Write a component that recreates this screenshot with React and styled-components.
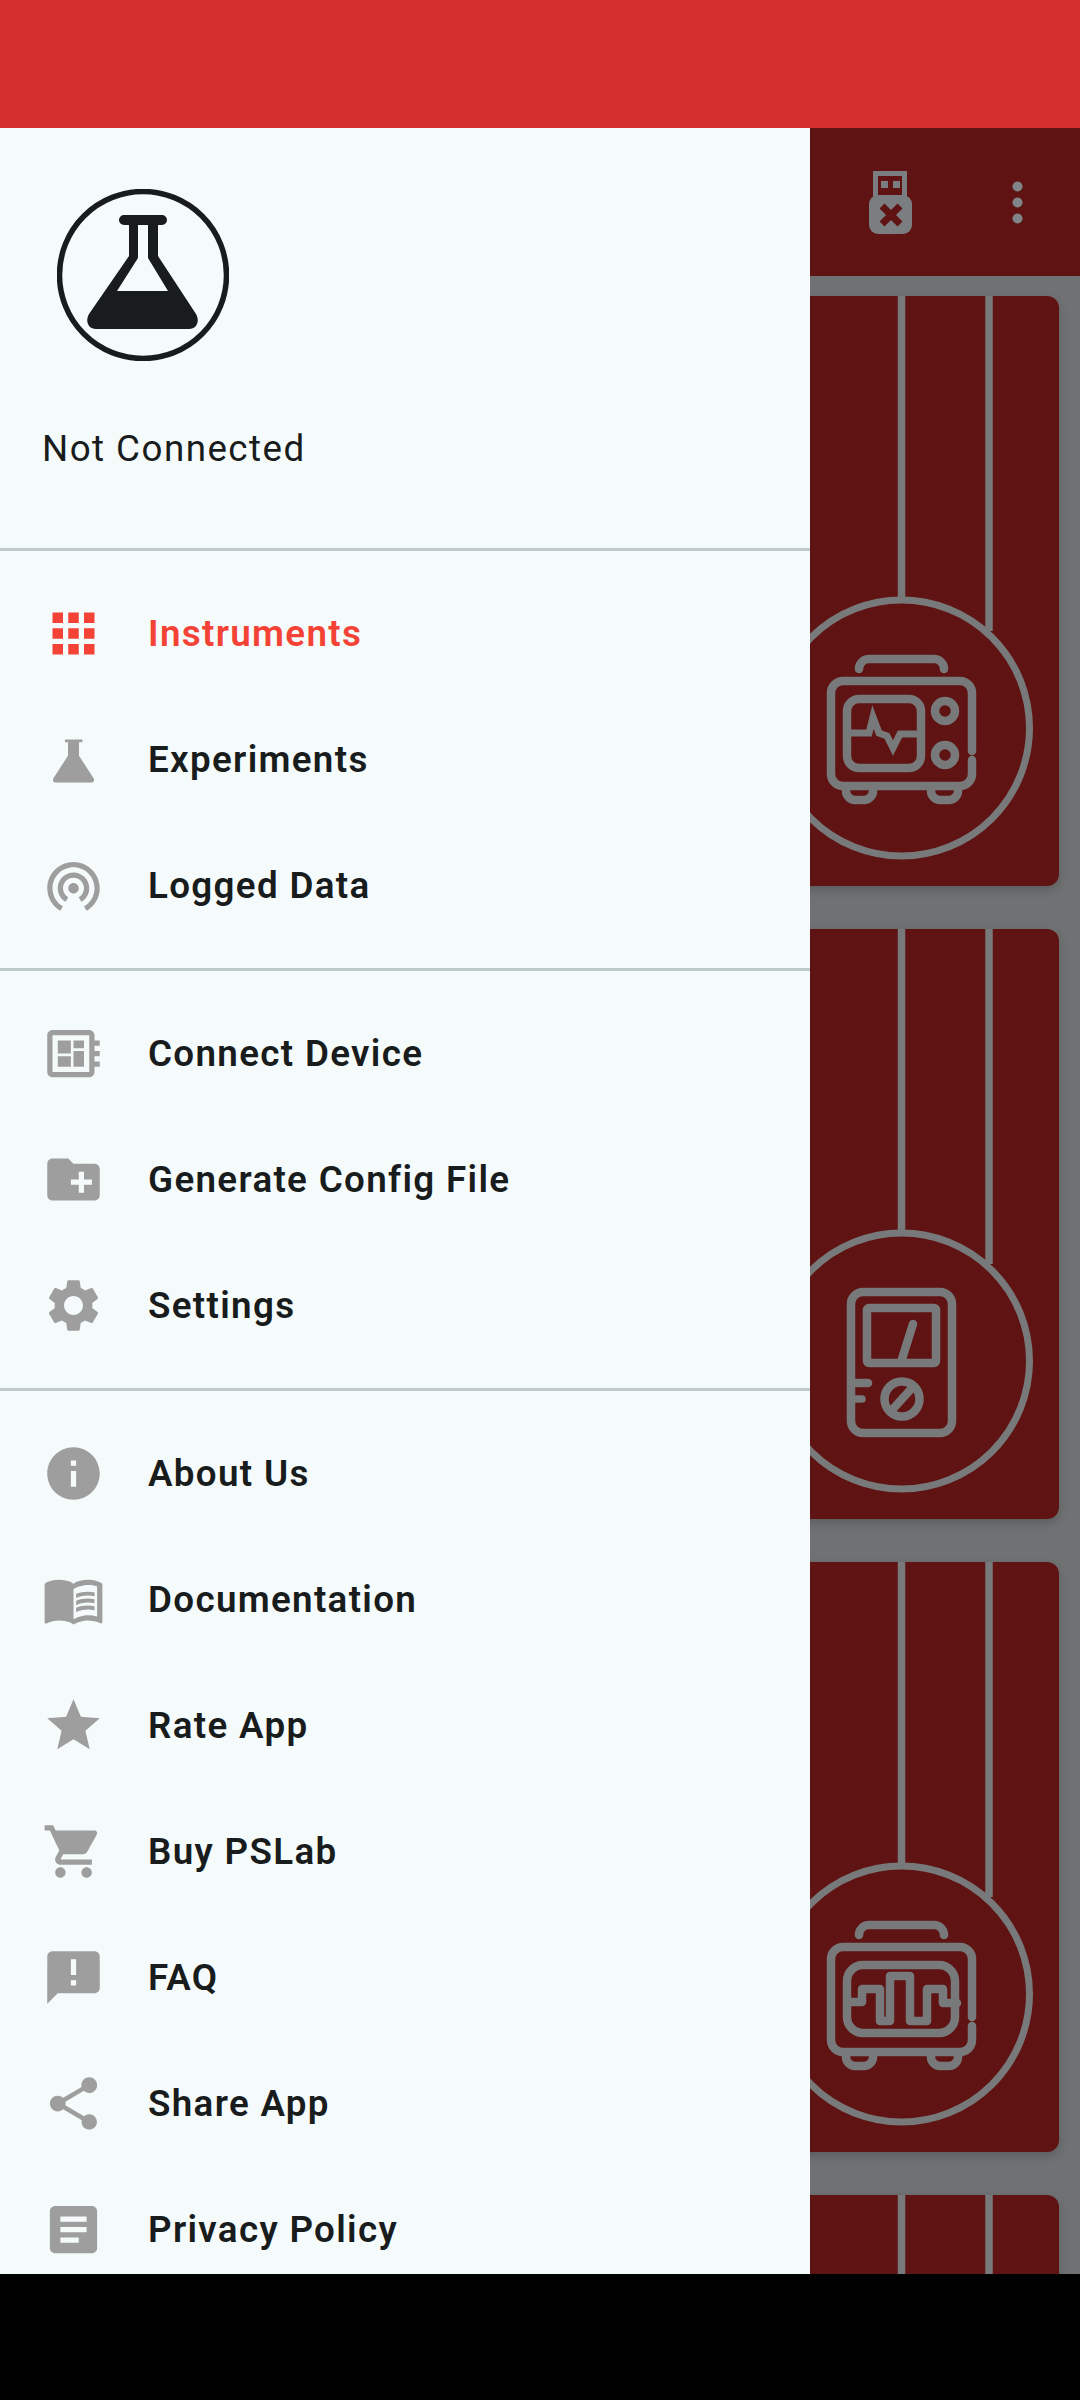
import styled, { createGlobalStyle } from "styled-components";
import {
  MdApps,
  MdWifiTethering,
  MdDeveloperBoard,
  MdCreateNewFolder,
  MdSettings,
  MdInfo,
  MdMenuBook,
  MdStar,
  MdShoppingCart,
  MdAnnouncement,
  MdShare,
  MdArticle,
} from "react-icons/md";

const GlobalStyle = createGlobalStyle`
  html, body {
    margin: 0;
    padding: 0;
    background: #000;
  }
  body {
    font-family: Roboto, "Liberation Sans", sans-serif;
  }
`;

const LINE = "#77797a";

const FlaskIcon = ({ size }) => (
  <svg width={size} height={size} viewBox="0 0 24 24" fill="currentColor">
    <path d="M9 4.4h6.2c.3 0 .3.9 0 1h-1.1v5.2l5.5 8.4c.5.9.2 1.8-.7 1.8H5.1c-.9 0-1.2-.9-.7-1.8l5.5-8.4V5.4H8.9c-.3-.1-.3-1 .1-1z" />
  </svg>
);

const sections = [
  [
    { label: "Instruments", Icon: MdApps, active: true },
    { label: "Experiments", Icon: FlaskIcon },
    { label: "Logged Data", Icon: MdWifiTethering },
  ],
  [
    { label: "Connect Device", Icon: MdDeveloperBoard },
    { label: "Generate Config File", Icon: MdCreateNewFolder },
    { label: "Settings", Icon: MdSettings },
  ],
  [
    { label: "About Us", Icon: MdInfo },
    { label: "Documentation", Icon: MdMenuBook },
    { label: "Rate App", Icon: MdStar },
    { label: "Buy PSLab", Icon: MdShoppingCart },
    { label: "FAQ", Icon: MdAnnouncement },
    { label: "Share App", Icon: MdShare },
    { label: "Privacy Policy", Icon: MdArticle },
  ],
];

const ScopeFrame = () => (
  <>
    <path d="M859 669v-1a10 10 0 0 1 10-9h65a10 10 0 0 1 10 9v1" />
    <path d="M972 751v-58a12 12 0 0 0-12-12H843a12 12 0 0 0-12 12v81a12 12 0 0 0 12 12h117a12 12 0 0 0 12-12v-14" />
    <path d="M846 788v3a9 9 0 0 0 9 9h9a9 9 0 0 0 9-9v-3" />
    <path d="M931 788v3a9 9 0 0 0 9 9h9a9 9 0 0 0 9-9v-3" />
  </>
);

const Oscilloscope = () => (
  <g>
    <ScopeFrame />
    <rect x="847" y="699" width="74" height="69" rx="12" />
    <circle cx="945" cy="711" r="10" />
    <circle cx="945" cy="755" r="10" />
    <path strokeWidth="7" strokeLinecap="butt" strokeLinejoin="miter" d="M847 733h22l4-16 6 16 8 3 6 12 7-14h21" />
  </g>
);

const Multimeter = () => (
  <g>
    <rect x="851" y="659" width="101" height="141" rx="12" />
    <rect x="867" y="675" width="69" height="55" rx="2" />
    <path d="M902 726l11-35" />
    <circle cx="902" cy="766" r="17.5" />
    <path d="M892 777l20-22" />
    <path d="M853 750h15" />
    <path strokeWidth="7.5" d="M853 766h9" />
  </g>
);

const WaveGenerator = () => (
  <g>
    <ScopeFrame />
    <rect x="847" y="699" width="108" height="68" rx="16" />
    <path d="M850 736h12v-13h18v32h10v-45h20v45h17v-32h16v14h14" />
  </g>
);

const cards = [Oscilloscope, Multimeter, WaveGenerator, null];

const Screen = styled.div`
  width: 1080px;
  height: 2400px;
  display: flex;
  flex-direction: column;
  overflow: hidden;
  background: #000;
`;

const StatusBar = styled.div`
  height: 128px;
  flex: none;
  background: #d32f2f;
`;

const Body = styled.div`
  position: relative;
  flex: 1;
  min-height: 0;
  overflow: hidden;
`;

const NavBar = styled.div`
  height: 126px;
  flex: none;
  background: #000;
`;

const Page = styled.div`
  height: 100%;
  display: flex;
  flex-direction: column;
  background: #6f7173;
  overflow: hidden;
`;

const Toolbar = styled.header`
  height: 148px;
  flex: none;
  box-sizing: border-box;
  padding-right: 31px;
  display: flex;
  align-items: center;
  justify-content: flex-end;
  gap: 64px;
  background: #5f1312;
`;

const CardList = styled.div`
  display: flex;
  flex-direction: column;
  gap: 43px;
  padding: 20px 21px;
`;

const Card = styled.div`
  height: 590px;
  flex: none;
  border-radius: 12px;
  background: #5f1312;
  box-shadow: 0 4px 10px rgba(0, 0, 0, 0.18);
  overflow: hidden;
`;

const Art = styled.svg`
  display: block;
  fill: none;
  stroke: ${LINE};
  stroke-width: 8.5;
  stroke-linecap: round;
  stroke-linejoin: round;
`;

const Drawer = styled.nav`
  position: absolute;
  top: 0;
  left: 0;
  bottom: 0;
  width: 810px;
  background: #f5fbfb;
  overflow: hidden;
`;

const DrawerHeader = styled.div`
  height: 420px;
  box-sizing: border-box;
  padding-top: 61px;
`;

const Logo = styled.svg`
  display: block;
  margin-left: 57px;
`;

const Status = styled.div`
  margin: 64px 0 0 42px;
  font-size: 36.75px;
  line-height: 48px;
  letter-spacing: 1.45px;
  color: #191c1c;
`;

const Section = styled.div`
  border-top: 3px solid #c1caca;
  padding: 19px 0 20px;
`;

const Row = styled.div`
  height: 126px;
  display: flex;
  align-items: center;
`;

const IconBox = styled.span`
  width: 63px;
  height: 63px;
  margin-left: 42px;
  display: flex;
  color: ${(props) => (props.$active ? "#f44336" : "#9e9e9f")};
`;

const Label = styled.span`
  margin-left: 43px;
  font-size: 36.75px;
  font-weight: 600;
  letter-spacing: 1.33px;
  color: ${(props) => (props.$active ? "#f44336" : "#191c1c")};
`;

export default function App() {
  return (
    <Screen>
      <GlobalStyle />
      <StatusBar />
      <Body>
        <Page>
          <Toolbar>
            <svg width="63" height="63" viewBox="859 170 63 63">
              <path fill="#7b7e80" fillRule="evenodd" d="M873 170h34v26h-34zM878 175v20h24v-20z" />
              <rect x="881" y="180" width="7" height="7" fill="#7b7e80" />
              <rect x="893" y="180" width="7" height="7" fill="#7b7e80" />
              <rect x="869" y="194" width="43" height="39" rx="9" fill="#7b7e80" />
              <path d="M882 205l18 18M900 205l-18 18" stroke="#5f1312" strokeWidth="7" />
            </svg>
            <svg width="63" height="63" viewBox="0 0 63 63" fill="#7f8589">
              <circle cx="31.5" cy="15.5" r="5" />
              <circle cx="31.5" cy="31.5" r="5" />
              <circle cx="31.5" cy="47.5" r="5" />
            </svg>
          </Toolbar>
          <CardList>
            {cards.map((Instrument, i) => (
              <Card key={i}>
                <Art width="1038" height="590" viewBox="21 296 1038 590">
                  <path strokeWidth="7.5" strokeLinecap="butt" d="M901.5 296v302M989 296v335" />
                  <circle cx="901.5" cy="728" r="128" strokeWidth="7" />
                  {Instrument && <Instrument />}
                </Art>
              </Card>
            ))}
          </CardList>
        </Page>
        <Drawer>
          <DrawerHeader>
            <Logo width="172" height="172" viewBox="57 188 172 172">
              <circle cx="143" cy="274" r="83.5" fill="none" stroke="#191c1c" strokeWidth="5.5" />
              <path
                fill="#191c1c"
                fillRule="evenodd"
                d="M124 214h38a5 5 0 0 1 0 10h-4v31l38 58c4 7 1 15-7 15H96c-8 0-11-8-7-15l40-58v-31h-5a5 5 0 0 1 0-10zM138 224v33l-21 33h51l-20-33v-33z"
              />
            </Logo>
            <Status>Not Connected</Status>
          </DrawerHeader>
          {sections.map((items, i) => (
            <Section key={i}>
              {items.map(({ label, Icon, active }) => (
                <Row key={label}>
                  <IconBox $active={active}>
                    <Icon size={63} />
                  </IconBox>
                  <Label $active={active}>{label}</Label>
                </Row>
              ))}
            </Section>
          ))}
        </Drawer>
      </Body>
      <NavBar />
    </Screen>
  );
}
